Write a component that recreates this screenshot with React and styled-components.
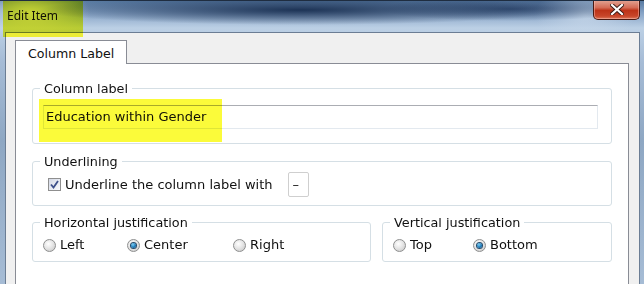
import React from "react";
import styled, { createGlobalStyle } from "styled-components";

const Global = createGlobalStyle`
  html, body { margin: 0; padding: 0; }
  body { width: 644px; height: 284px; overflow: hidden; background: #9fb6cf; }
  #root { width: 644px; height: 284px; }
`;

const Window = styled.div`
  position: relative;
  width: 644px;
  height: 284px;
  display: flex;
  flex-direction: column;
  overflow: hidden;
  background:
    radial-gradient(ellipse 260px 15px at 300px 9px, rgba(24, 46, 80, 0.95), rgba(24, 46, 80, 0) 100%),
    radial-gradient(ellipse 130px 12px at 510px 8px, rgba(36, 60, 98, 0.8), rgba(36, 60, 98, 0) 100%),
    radial-gradient(ellipse 60px 30px at 30px 12px, rgba(205, 218, 233, 0.95), rgba(205, 218, 233, 0) 100%),
    radial-gradient(ellipse 50px 30px at 585px 14px, rgba(200, 216, 234, 0.8), rgba(200, 216, 234, 0) 100%),
    linear-gradient(180deg, #587aa2 0px, #86a3c6 12px, #bcd0e5 27px, #a6bcd6 60px, #8ea7c3 140px, #a6bcd5 284px);
  border-top: 1px solid #1f2d40;
  box-sizing: border-box;
`;

const TitleBar = styled.div`
  height: 31px;
  flex: 0 0 31px;
  display: flex;
  align-items: flex-start;
  box-sizing: border-box;
`;

const Title = styled.div`
  font-family: "Noto Sans", "Open Sans", sans-serif;
  font-size: 12px;
  color: #111;
  padding: 7px 0 0 7px;
  line-height: 16px;
`;

const CloseButton = styled.div`
  margin-left: auto;
  margin-right: 4px;
  margin-top: -1px;
  width: 47px;
  height: 20px;
  box-sizing: border-box;
  border: 1px solid #4a1a12;
  border-top: none;
  border-radius: 0 0 5px 5px;
  background: linear-gradient(180deg, #e3a797 0%, #d46c56 40%, #bd3318 55%, #c8462a 85%, #dc7a5c 100%);
  display: flex;
  align-items: center;
  justify-content: center;
  box-shadow: inset 0 0 0 1px rgba(255, 200, 190, 0.45);
`;

const Client = styled.div`
  flex: 1;
  margin: 0 4px 0 5px;
  background: #f0f0f0;
  border: 1px solid #6b7d94;
  border-bottom: none;
  padding: 7px 10px 0 9px;
  display: flex;
  flex-direction: column;
  box-sizing: border-box;
`;

const TabStrip = styled.div`
  display: flex;
  height: 23px;
  position: relative;
  z-index: 1;
`;

const Tab = styled.div`
  width: 112px;
  height: 24px;
  box-sizing: border-box;
  background: #fff;
  border: 1px solid #898c95;
  border-bottom: none;
  font-family: "DejaVu Sans", Verdana, sans-serif;
  font-size: 12.6px;
  color: #111;
  padding: 5px 0 0 12px;
  line-height: 16px;
`;

const Panel = styled.div`
  flex: 1;
  background: #fff;
  border: 1px solid #898c95;
  border-bottom: none;
  padding: 17px 16px 0 16px;
  display: flex;
  flex-direction: column;
`;

const Group = styled.fieldset`
  margin: ${(p) => p.$mt || "0"} 0 0 0;
  border: 1px solid #d5dfe5;
  border-radius: 3px;
  padding: ${(p) => p.$pad || "0"};
  min-width: 0;
  box-sizing: border-box;
  flex: ${(p) => p.$flex || "none"};
  display: block;
`;

const Legend = styled.legend`
  font-family: "DejaVu Sans", Verdana, sans-serif;
  font-size: 12.8px;
  color: #111;
  padding: 0 4px;
  margin-left: ${(p) => p.$ml || "-3px"};
  line-height: 15px;
`;

const TextInput = styled.div`
  height: 24px;
  box-sizing: border-box;
  border: 1px solid #e3e9ef;
  border-top-color: #abadb3;
  background: #fff;
  font-family: "DejaVu Sans", Verdana, sans-serif;
  font-size: 13px;
  color: #111;
  padding: 3px 0 0 2px;
  line-height: 16px;
`;

const Row = styled.div`
  display: flex;
  align-items: center;
`;

const Label = styled.span`
  font-family: "DejaVu Sans", Verdana, sans-serif;
  font-size: 13px;
  color: #111;
  line-height: 16px;
  white-space: nowrap;
`;

const Check = styled.span`
  width: 13px;
  height: 13px;
  box-sizing: border-box;
  border: 1px solid #8f8f8f;
  background: linear-gradient(135deg, #d4d9e6, #f8f9fc);
  display: inline-flex;
  align-items: center;
  justify-content: center;
  margin-right: 4px;
  flex: none;
`;

const UnderlineBox = styled.div`
  width: 21px;
  height: 25px;
  box-sizing: border-box;
  border: 1px solid #cfcfcf;
  border-radius: 2px;
  background: #fff;
  margin-left: 15px;
  font-family: "DejaVu Sans", Verdana, sans-serif;
  font-size: 13px;
  color: #111;
  display: flex;
  align-items: center;
  padding-left: 4px;
`;

const Justify = styled.div`
  display: flex;
  gap: 11px;
  margin-top: 9px;
`;

const RadioItem = styled.div`
  display: flex;
  align-items: center;
  width: ${(p) => p.$w || "auto"};
`;

const RadioDot = styled.span`
  width: 13px;
  height: 13px;
  box-sizing: border-box;
  border-radius: 50%;
  border: 1px solid #8e8f8f;
  background: radial-gradient(circle at 40% 35%, #ffffff 0%, #e6e6e6 45%, #c3c3c3 100%);
  display: inline-flex;
  align-items: center;
  justify-content: center;
  margin-right: 4px;
  flex: none;
  &::after {
    content: "";
    width: 5px;
    height: 5px;
    border-radius: 50%;
    display: ${(p) => (p.$on ? "block" : "none")};
    background: radial-gradient(circle at 40% 35%, #7fd0f5 0%, #1b79b8 55%, #0d4f86 100%);
    box-shadow: 0 0 0 1px #254a6a;
  }
`;

const Highlight = styled.div`
  position: absolute;
  background: #fbfb3a;
  mix-blend-mode: multiply;
  pointer-events: none;
`;

function Radio({ on, children, w }) {
  return (
    <RadioItem $w={w}>
      <RadioDot $on={on} />
      <Label>{children}</Label>
    </RadioItem>
  );
}

export default function App() {
  return (
    <>
      <Global />
      <Window>
        <TitleBar>
          <Title>Edit Item</Title>
          <CloseButton>
            <svg width="14" height="11" viewBox="0 0 14 11">
              <path
                d="M2 1 L12 10 M12 1 L2 10"
                stroke="#3a1a14"
                strokeWidth="4"
                strokeLinecap="square"
              />
              <path
                d="M2 1 L12 10 M12 1 L2 10"
                stroke="#ffffff"
                strokeWidth="2.2"
                strokeLinecap="square"
              />
            </svg>
          </CloseButton>
        </TitleBar>
        <Client>
          <TabStrip>
            <Tab>Column Label</Tab>
          </TabStrip>
          <Panel>
            <Group $pad="9px 13px 14px 10px">
              <Legend>Column label</Legend>
              <TextInput>Education within Gender</TextInput>
            </Group>
            <Group $mt="10px" $pad="3px 13px 8px 15px">
              <Legend $ml="-8px">Underlining</Legend>
              <Row>
                <Check>
                  <svg width="11" height="11" viewBox="0 0 11 11">
                    <path d="M2 5.5 L4.5 8.5 L9 2" fill="none" stroke="#3c4f8a" strokeWidth="1.8" />
                  </svg>
                </Check>
                <Label>Underline the column label with</Label>
                <UnderlineBox>–</UnderlineBox>
              </Row>
            </Group>
            <Justify>
              <Group $flex="0 0 339px" $pad="7px 10px 8px 10px">
                <Legend>Horizontal justification</Legend>
                <Row>
                  <Radio w="84px">Left</Radio>
                  <Radio on w="106px">Center</Radio>
                  <Radio>Right</Radio>
                </Row>
              </Group>
              <Group $flex="1" $pad="7px 10px 8px 10px">
                <Legend>Vertical justification</Legend>
                <Row>
                  <Radio w="80px">Top</Radio>
                  <Radio on>Bottom</Radio>
                </Row>
              </Group>
            </Justify>
          </Panel>
        </Client>
        <Highlight style={{ left: 3, top: 0, width: 80, height: 36 }} />
        <Highlight style={{ left: 39, top: 98, width: 183, height: 43 }} />
      </Window>
    </>
  );
}
